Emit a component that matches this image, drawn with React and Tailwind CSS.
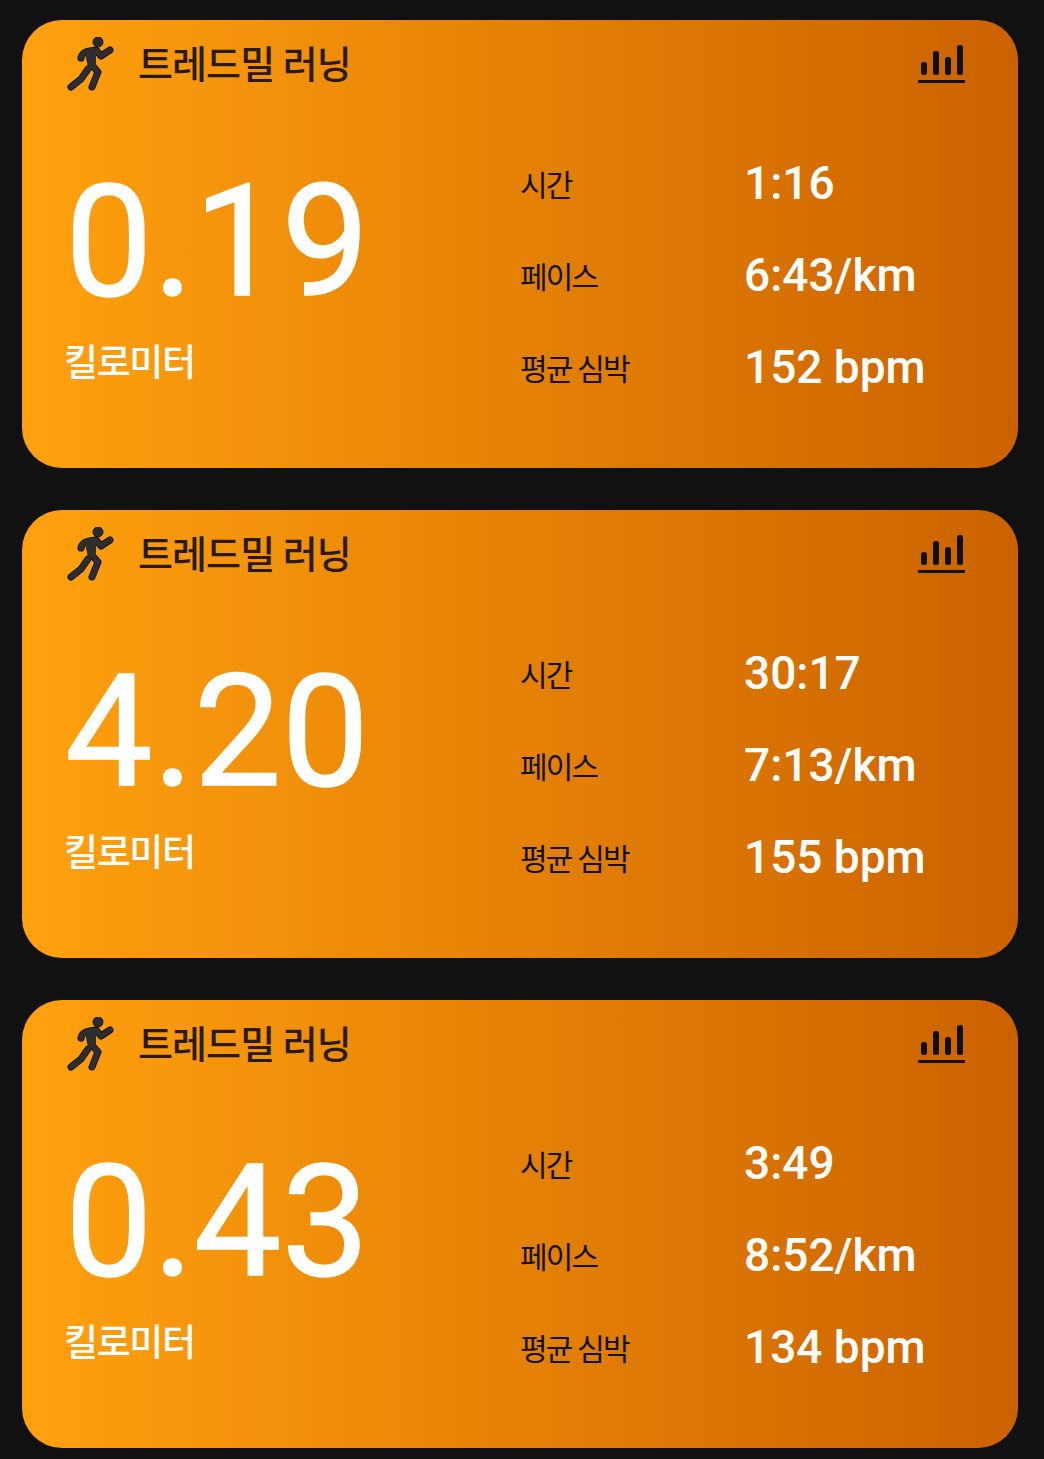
import React from 'react';

const workouts = [
  { distance: '0.19', time: '1:16', pace: '6:43/km', heart: '152 bpm' },
  { distance: '4.20', time: '30:17', pace: '7:13/km', heart: '155 bpm' },
  { distance: '0.43', time: '3:49', pace: '8:52/km', heart: '134 bpm' },
];

const fontStack = "font-['Roboto','Noto_Sans_CJK_KR',sans-serif]";

function RunnerIcon() {
  const limbs = 'M15 21 C16 16 19 14 30 13 L35 19 L44 13 M24 14 C23 20 24 24 25 27 L32 35 L26 50 M22 32 L15 42 L5 50';
  return (
    <svg width="48" height="56" viewBox="0 0 48 56" className="shrink-0">
      <circle cx="32" cy="5" r="5" fill="#2b2b2b" stroke="#111" strokeWidth="1" />
      <path d={limbs} fill="none" stroke="#111" strokeWidth="7" strokeLinecap="round" strokeLinejoin="round" />
      <path d={limbs} fill="none" stroke="#2e2e2e" strokeWidth="5" strokeLinecap="round" strokeLinejoin="round" />
      <path d="M19 14 L30 14 L30 28 L23 32 Z" fill="#2e2e2e" />
    </svg>
  );
}

function ChartIcon() {
  return (
    <svg width="47" height="39" viewBox="0 0 47 39" className="shrink-0">
      <rect x="3" y="17" width="6" height="13" rx="2.5" fill="#111" />
      <rect x="15" y="6" width="6" height="24" rx="2.5" fill="#111" />
      <rect x="27" y="12" width="6" height="18" rx="2.5" fill="#111" />
      <rect x="39" y="0" width="6" height="30" rx="2.5" fill="#111" />
      <rect x="0" y="35" width="47" height="3" fill="#111" />
    </svg>
  );
}

function Stat({ label, value }) {
  return (
    <div className="flex h-[92px] items-center">
      <span className="w-[225px] pt-[4px] text-[30px] leading-none text-[#111] tracking-[-1.8px]">{label}</span>
      <span className="-ml-[1px] -mt-[2px] text-[46px] leading-none font-medium text-white">{value}</span>
    </div>
  );
}

function WorkoutCard({ workout }) {
  return (
    <div className="h-[448px] rounded-[40px] bg-gradient-to-r from-[#ffa10f] to-[#cb6200] pl-[44px] pr-[53px]">
      <div className="flex h-[88px] items-center justify-between pt-[2px]">
        <div className="flex items-center gap-[24px]">
          <RunnerIcon />
          <span className="text-[38px] leading-none font-medium text-[#2a1a08] tracking-[-0.9px]">트레드밀 러닝</span>
        </div>
        <div className="-mt-[1px]">
          <ChartIcon />
        </div>
      </div>
      <div className="flex pt-[30px]">
        <div className="w-[454px] shrink-0">
          <div className="-ml-[1px] mt-[26px] text-[156px] leading-[156px] text-white [-webkit-text-stroke:1.5px_white]">{workout.distance}</div>
          <div className="-ml-[2px] mt-[25px] text-[37px] leading-none font-medium text-white tracking-[-1.4px]">킬로미터</div>
        </div>
        <div className="flex flex-col">
          <Stat label="시간" value={workout.time} />
          <Stat label="페이스" value={workout.pace} />
          <Stat label="평균 심박" value={workout.heart} />
        </div>
      </div>
    </div>
  );
}

export default function App() {
  return (
    <div className={`flex min-h-screen flex-col gap-[42px] bg-[#111111] pl-[22px] pr-[26px] py-[20px] ${fontStack}`}>
      {workouts.map((workout) => (
        <WorkoutCard key={workout.distance} workout={workout} />
      ))}
    </div>
  );
}
